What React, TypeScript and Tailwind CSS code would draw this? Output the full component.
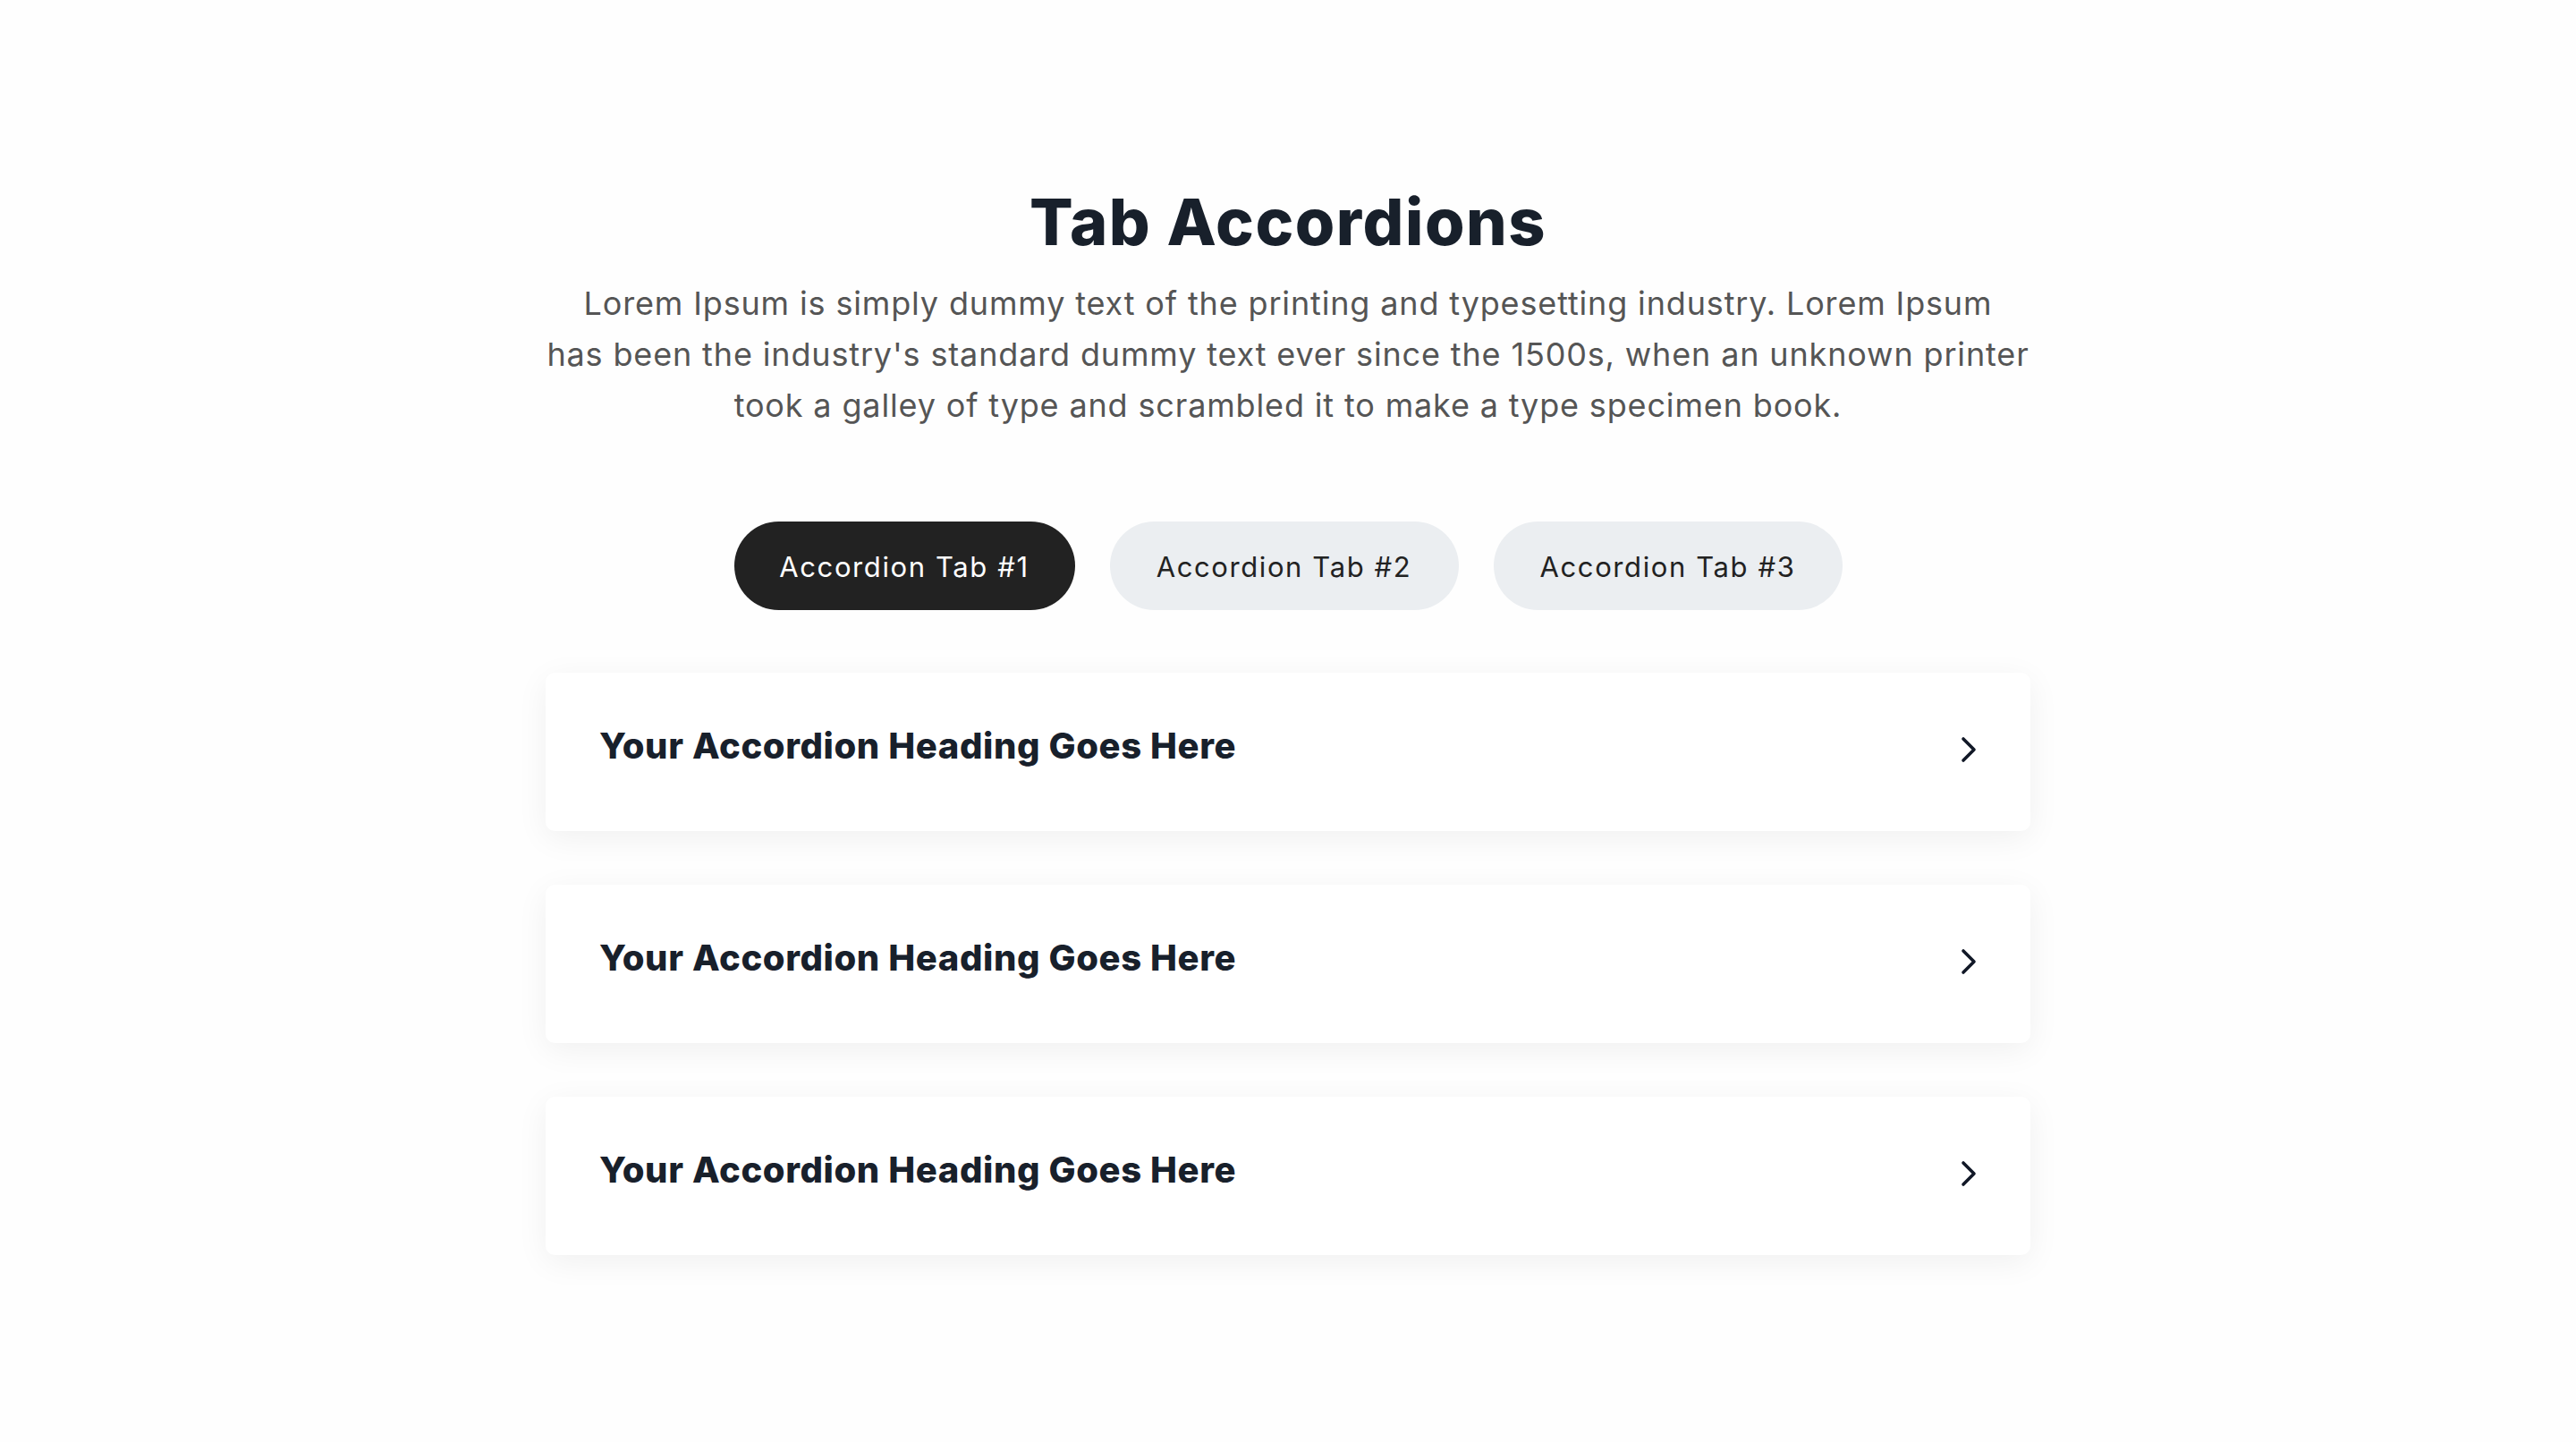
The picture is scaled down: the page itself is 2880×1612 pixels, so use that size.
import React from "react";

const font = { fontFamily: "Inter, 'Noto Sans', sans-serif" };

function Chevron() {
  return (
    <svg width="18" height="30" viewBox="0 0 18 30" fill="none" className="shrink-0 -mt-[5px]">
      <polyline points="3,3 15,15 3,27" stroke="#111827" strokeWidth="3.6" strokeLinecap="round" strokeLinejoin="round" />
    </svg>
  );
}

export default function App() {
  const tabs = [
    { label: "Accordion Tab #1", active: true, w: "w-[381px]" },
    { label: "Accordion Tab #2", active: false, w: "w-[390px]" },
    { label: "Accordion Tab #3", active: false, w: "w-[390px]" },
  ];
  return (
    <div className="min-h-[1612px] w-full bg-[#fefefe] pt-[205px]" style={font}>
      <div className="mx-auto w-[1664px] flex flex-col items-center">
        <h1 className="text-[72px] leading-[86px] font-extrabold text-[#18202b] tracking-[1.5px]">Tab Accordions</h1>
        <p className="mt-[20px] text-center text-[36px] leading-[57px] text-[#555555] tracking-[0.85px]">
          Lorem Ipsum is simply dummy text of the printing and typesetting industry. Lorem Ipsum
          <br />
          has been the industry's standard dummy text ever since the 1500s, when an unknown printer
          <br />
          took a galley of type and scrambled it to make a type specimen book.
        </p>
        <div className="mt-[101px] flex justify-center gap-[39px]">
          {tabs.map((t) => (
            <button
              key={t.label}
              className={
                "h-[99px] rounded-full text-[31px] tracking-[1.6px] pt-[4px] flex items-center justify-center " +
                t.w +
                " " +
                (t.active ? "bg-[#222222] text-white" : "bg-[#ebeef1] text-[#222222]")
              }
            >
              {t.label}
            </button>
          ))}
        </div>
        <div className="mt-[70px] w-[1660px] flex flex-col gap-[60px]">
          {[0, 1, 2].map((i) => (
            <div
              key={i}
              className="h-[177px] rounded-[10px] bg-white px-[60px] flex items-center justify-between shadow-[0_8px_36px_rgba(0,0,0,0.06)]"
            >
              <span className="text-[40px] font-extrabold text-[#18202b] tracking-[0.6px] -mt-[13px]">Your Accordion Heading Goes Here</span>
              <Chevron />
            </div>
          ))}
        </div>
      </div>
    </div>
  );
}
